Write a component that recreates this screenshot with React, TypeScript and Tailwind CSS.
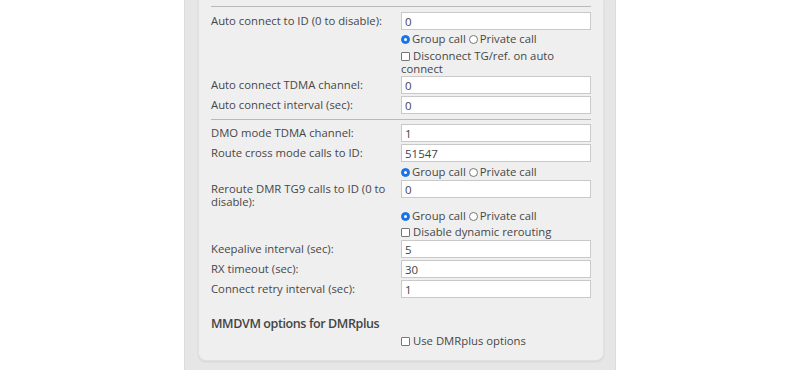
import React from "react";

const font = { fontFamily: '"Open Sans", "Noto Sans", Arial, sans-serif' };

function Input({ value }: { value: string }) {
  return (
    <input
      readOnly
      value={value}
      className="w-[190px] h-[18px] bg-white border border-[#c9c9c9] px-[3px] text-[11.5px] text-[#444] outline-none"
      style={font}
    />
  );
}

function Row({ label, value }: { label: string; value: string }) {
  return (
    <div className="flex items-start h-[20px]">
      <div className="w-[190px] shrink-0 leading-[18px] pr-[8px] whitespace-nowrap">{label}</div>
      <Input value={value} />
    </div>
  );
}

function Radios({ h = "h-[16px]" }: { h?: string }) {
  return (
    <div className={`flex items-center ml-[190px] ${h}`}>
      <span className="w-[9px] h-[9px] rounded-full bg-[#1a73e8] border border-[#1a73e8] flex items-center justify-center mr-[2px]">
        <span className="w-[3px] h-[3px] rounded-full bg-white" />
      </span>
      <span>Group call</span>
      <span className="w-[9px] h-[9px] rounded-full bg-white border border-[#777] ml-[3px] mr-[2px]" />
      <span>Private call</span>
    </div>
  );
}

function Box() {
  return <span className="inline-block w-[9px] h-[9px] bg-white border border-[#777] rounded-[1px] mr-[3px] align-[-1px]" />;
}

export default function App() {
  return (
    <div className="w-[800px] h-[370px] bg-white overflow-hidden flex justify-center" style={font}>
      <div className="w-[432px] h-full bg-[#e6e6e6] px-[13px] border-l border-r border-[#dcdcdc]">
        <div className="w-[406px] h-[361px] bg-[#efefef] rounded-b-[8px] border border-t-0 border-[#e0e0e0] shadow-[0_1px_2px_rgba(0,0,0,0.08)] px-[12px] text-[11.3px] text-[#474747]">
          <div className="h-[6px]" />
          <div className="border-t border-[#b9b9b9] h-[6px]" />
          <Row label="Auto connect to ID (0 to disable):" value="0" />
          <Radios h="h-[15px]" />
          <div className="ml-[190px] w-[190px] leading-[13px] pt-[2px] h-[29px]">
            <Box />
            Disconnect TG/ref. on auto connect
          </div>
          <Row label="Auto connect TDMA channel:" value="0" />
          <Row label="Auto connect interval (sec):" value="0" />
          <div className="h-[3px]" />
          <div className="border-t border-[#b9b9b9] h-[5px]" />
          <Row label="DMO mode TDMA channel:" value="1" />
          <Row label="Route cross mode calls to ID:" value="51547" />
          <Radios />
          <div className="flex items-start h-[28px]">
            <div className="w-[190px] shrink-0 leading-[13px] pt-[2px] pr-[6px]">
              Reroute DMR TG9 calls to ID (0 to disable):
            </div>
            <Input value="0" />
          </div>
          <Radios />
          <div className="ml-[190px] h-[16px] leading-[16px]">
            <Box />
            Disable dynamic rerouting
          </div>
          <Row label="Keepalive interval (sec):" value="5" />
          <Row label="RX timeout (sec):" value="30" />
          <Row label="Connect retry interval (sec):" value="1" />
          <div className="mt-[15px] h-[18px] text-[12.5px] font-semibold text-[#444] leading-[18px] tracking-[-0.4px]">
            MMDVM options for DMRplus
          </div>
          <div className="ml-[190px] h-[16px] leading-[16px]">
            <Box />
            Use DMRplus options
          </div>
        </div>
      </div>
    </div>
  );
}
